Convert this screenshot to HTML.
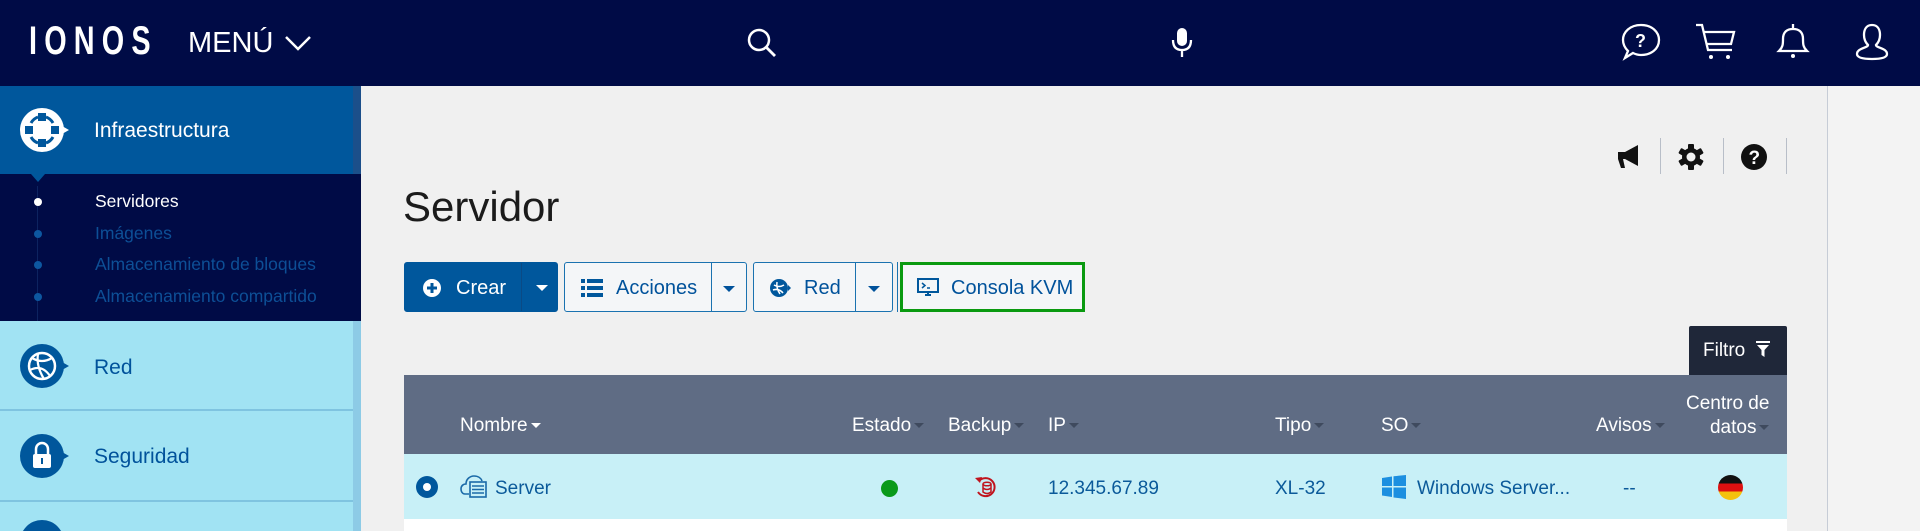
<!DOCTYPE html>
<html><head><meta charset="utf-8"><style>
*{margin:0;padding:0;box-sizing:border-box}
html{width:1920px;height:531px;overflow:hidden}
body{width:1920px;height:531px;overflow:hidden;background:#f0f0f0;font-family:"Liberation Sans",sans-serif;position:relative}
.a{position:absolute}
.nav{left:0;top:0;width:1920px;height:86px;background:#000b46}
.side{left:0;top:86px;width:361px;height:445px;background:#a1e3f3;overflow:hidden}
.t{white-space:nowrap}
.btn{position:absolute;top:262px;height:50px;border:1px solid #1a72b0;border-radius:3px;background:#f4f6f8;color:#00529b;font-size:20px}
.btn .s{position:absolute;top:0;bottom:0;border-left:1px solid #1a72b0}
.car{position:absolute;width:0;height:0;border-left:6px solid transparent;border-right:6px solid transparent;border-top:6px solid currentColor}
.th{color:#fff;font-size:19px;top:415px}
.th i{display:inline-block;width:0;height:0;border-left:5px solid transparent;border-right:5px solid transparent;border-top:5px solid #3f4a5e;margin-left:3px;vertical-align:middle}
.td{color:#0b5a9a;font-size:19px;top:478px}
</style></head><body>
<div class="a nav">
  <div class="a t" style="left:29px;top:19px;color:#fff;font-size:40px;letter-spacing:10px;font-weight:bold;transform:scaleX(0.72);transform-origin:left">IONOS</div>
  <div class="a t" style="left:188px;top:27px;color:#fff;font-size:29px">MENÚ</div>
  <svg class="a" style="left:284px;top:34px" width="28" height="18"><path d="M2 3 L14 15 L26 3" stroke="#fff" stroke-width="2.5" fill="none"/></svg>
  <svg class="a" style="left:746px;top:27px" width="32" height="32"><circle cx="13" cy="13" r="10" stroke="#fff" stroke-width="2.5" fill="none"/><path d="M20 20 L29 29" stroke="#fff" stroke-width="2.8"/></svg>
  <svg class="a" style="left:1170px;top:26px" width="24" height="34"><rect x="7" y="2" width="10" height="18" rx="5" fill="#fff"/><path d="M3 14 Q3 24 12 24 Q21 24 21 14 M12 24 V31" stroke="#fff" stroke-width="2.3" fill="none"/></svg>
  <svg class="a" style="left:1620px;top:22px" width="42" height="40"><path d="M21 3 C32 3 39 10 39 18 C39 27 31 33 21 33 C18 33 15 32 13 31 L5 36 L8 29 C5 26 3 22 3 18 C3 10 10 3 21 3 Z" stroke="#fff" stroke-width="2.3" fill="none"/><text x="15" y="25" fill="#fff" font-size="18" font-weight="bold" font-family="Liberation Sans">?</text></svg>
  <svg class="a" style="left:1694px;top:22px" width="44" height="40"><path d="M2 3 H8 L14 28 H38 M10 10 H40 L37 22 H13" stroke="#fff" stroke-width="2.3" fill="none"/><circle cx="17" cy="35" r="2" fill="#fff"/><circle cx="34" cy="35" r="2" fill="#fff"/></svg>
  <svg class="a" style="left:1774px;top:22px" width="38" height="40"><path d="M19 2 V6 M5 29 C9 25 9 22 9 17 C9 10 13 7 19 7 C25 7 29 10 29 17 C29 22 29 25 33 29 Z" stroke="#fff" stroke-width="2.3" fill="none"/><circle cx="19" cy="34" r="2" fill="#fff"/></svg>
  <svg class="a" style="left:1852px;top:22px" width="40" height="40"><path d="M20 3 C14 3 12 8 12 13 C12 18 14 21 16 23 C16 26 5 26 5 32 C5 36 12 37 20 37 C28 37 35 36 35 32 C35 26 24 26 24 23 C26 21 28 18 28 13 C28 8 26 3 20 3 Z" stroke="#fff" stroke-width="2.3" fill="none"/></svg>
</div>

<div class="a side">
  <div class="a" style="left:353px;top:0;width:8px;height:445px;background:#8dcbe6"></div>
  <div class="a" style="left:0;top:0;width:353px;height:88px;background:#00579c"></div>
  <div class="a" style="left:353px;top:0;width:8px;height:88px;background:#1b4f8a"></div>
  <svg class="a" style="left:16px;top:20px" width="56" height="48"><circle cx="26" cy="24" r="22" fill="#fff"/><path d="M46 20 L53 24 L46 28Z" fill="#fff"/><path d="M15 17 A13 13 0 0 1 22 11 M30 11 A13 13 0 0 1 37 17 M37 31 A13 13 0 0 1 30 37 M22 37 A13 13 0 0 1 15 31" stroke="#00579c" stroke-width="3" fill="none"/><rect x="22" y="7" width="8" height="8" fill="#00579c"/><rect x="22" y="33" width="8" height="8" fill="#00579c"/><rect x="9" y="20" width="8" height="8" fill="#00579c"/><rect x="35" y="20" width="8" height="8" fill="#00579c"/></svg>
  <div class="a t" style="left:94px;top:33px;color:#fff;font-size:21px">Infraestructura</div>
  <div class="a" style="left:0;top:88px;width:361px;height:147px;background:#000b46"></div>
  <div class="a" style="left:31px;top:88px;width:14px;height:8px;background:#00579c;clip-path:polygon(0 0,100% 0,50% 100%)"></div>
  <div class="a" style="left:37px;top:100px;width:1px;height:135px;background:#0d2360"></div>
  <div class="a" style="left:34px;top:112px;width:8px;height:8px;border-radius:50%;background:#fff"></div>
  <div class="a" style="left:34px;top:144px;width:8px;height:8px;border-radius:50%;background:#0d57a0"></div>
  <div class="a" style="left:34px;top:175px;width:8px;height:8px;border-radius:50%;background:#0d57a0"></div>
  <div class="a" style="left:34px;top:207px;width:8px;height:8px;border-radius:50%;background:#0d57a0"></div>
  <div class="a t" style="left:95px;top:105px;color:#fff;font-size:17.5px">Servidores</div>
  <div class="a t" style="left:95px;top:137px;color:#0d4f96;font-size:17.5px">Imágenes</div>
  <div class="a t" style="left:95px;top:168px;color:#0d4f96;font-size:17.5px">Almacenamiento de bloques</div>
  <div class="a t" style="left:95px;top:200px;color:#0d4f96;font-size:17.5px">Almacenamiento compartido</div>
  <svg class="a" style="left:16px;top:256px" width="56" height="48"><circle cx="26" cy="24" r="22" fill="#00579c"/><path d="M46 20 L53 24 L46 28Z" fill="#00579c"/><circle cx="26" cy="24" r="13" stroke="#fff" stroke-width="2.5" fill="none"/><path d="M16 16 Q26 22 36 16 M14 28 Q26 22 34 34 M22 12 Q20 24 28 37" stroke="#fff" stroke-width="2.2" fill="none"/></svg>
  <div class="a t" style="left:94px;top:270px;color:#00529b;font-size:21px">Red</div>
  <div class="a" style="left:0;top:323px;width:353px;height:2px;background:#7fc4e0"></div>
  <svg class="a" style="left:16px;top:346px" width="56" height="48"><circle cx="26" cy="24" r="22" fill="#00579c"/><path d="M46 20 L53 24 L46 28Z" fill="#00579c"/><rect x="17" y="22" width="18" height="14" rx="2" fill="#fff"/><path d="M20 22 V17 A6 6 0 0 1 32 17 V22" stroke="#fff" stroke-width="2.5" fill="none"/><rect x="25" y="26" width="2" height="6" fill="#00579c"/></svg>
  <div class="a t" style="left:94px;top:359px;color:#00529b;font-size:21px">Seguridad</div>
  <div class="a" style="left:0;top:414px;width:353px;height:2px;background:#7fc4e0"></div>
  <div class="a" style="left:20px;top:434px;width:44px;height:44px;border-radius:50%;background:#00579c"></div>
</div>

<div class="a" style="left:1827px;top:86px;width:1px;height:445px;background:#c6ccd6"></div>
<div class="a" style="left:1828px;top:86px;width:92px;height:445px;background:#f3f3f3"></div>

<div class="a t" style="left:403px;top:183px;color:#1b1b1b;font-size:42px">Servidor</div>

<svg class="a" style="left:1614px;top:142px" width="30" height="30"><path d="M4 10 H11 L24 3 V24 L11 17 H9 L11 26 H7 L4 17 Z" fill="#111"/></svg>
<div class="a" style="left:1660px;top:138px;width:1px;height:36px;background:#b8bec8"></div>
<svg class="a" style="left:1677px;top:143px" width="28" height="28" viewBox="0 0 28 28"><g fill="#111"><circle cx="14" cy="14" r="9"/><rect x="11" y="1" width="6" height="26" rx="1"/><rect x="11" y="1" width="6" height="26" rx="1" transform="rotate(60 14 14)"/><rect x="11" y="1" width="6" height="26" rx="1" transform="rotate(120 14 14)"/></g><circle cx="14" cy="14" r="4.5" fill="#f0f0f0"/></svg>
<div class="a" style="left:1723px;top:138px;width:1px;height:36px;background:#b8bec8"></div>
<svg class="a" style="left:1740px;top:143px" width="28" height="28"><circle cx="14" cy="14" r="13" fill="#111"/><text x="8.5" y="21" fill="#fff" font-size="19" font-weight="bold" font-family="Liberation Sans">?</text></svg>
<div class="a" style="left:1786px;top:138px;width:1px;height:36px;background:#b8bec8"></div>

<div class="btn" style="left:404px;width:154px;background:#00579c;border-color:#00579c;color:#fff">
  <svg class="a" style="left:17px;top:15px" width="20" height="20"><circle cx="10" cy="10" r="9" fill="#fff"/><path d="M10 5 V15 M5 10 H15" stroke="#00579c" stroke-width="3"/></svg>
  <span class="a t" style="left:51px;top:14px">Crear</span>
  <span class="s" style="left:116px;border-color:#0a4a85"></span>
  <span class="car" style="left:131px;top:22px;color:#fff"></span>
</div>
<div class="btn" style="left:564px;width:183px">
  <svg class="a" style="left:16px;top:16px" width="22" height="18" fill="#00579c"><rect x="0" y="0" width="4" height="4"/><rect x="6" y="0" width="16" height="4"/><rect x="0" y="7" width="4" height="4"/><rect x="6" y="7" width="16" height="4"/><rect x="0" y="14" width="4" height="4"/><rect x="6" y="14" width="16" height="4"/></svg>
  <span class="a t" style="left:51px;top:14px">Acciones</span>
  <span class="s" style="left:146px"></span>
  <span class="car" style="left:158px;top:23px"></span>
</div>
<div class="btn" style="left:753px;width:140px">
  <svg class="a" style="left:15px;top:15px" width="22" height="20"><circle cx="10" cy="10" r="9" fill="#00579c"/><path d="M19 7 L22 10 L19 13Z" fill="#00579c"/><path d="M5 7 Q10 10 15 7 M4 12 Q10 10 14 15 M8 4 Q7 10 11 16" stroke="#fff" stroke-width="1.5" fill="none"/></svg>
  <span class="a t" style="left:50px;top:14px">Red</span>
  <span class="s" style="left:101px"></span>
  <span class="car" style="left:114px;top:23px"></span>
</div>
<div class="a" style="left:897px;top:262px;width:1px;height:50px;background:#1a72b0"></div>
<div class="btn" style="left:900px;width:185px;border:3px solid #0a9a10;border-radius:0;color:#00529b">
  <svg class="a" style="left:14px;top:13px" width="22" height="20"><rect x="1" y="1" width="20" height="13" stroke="#00579c" stroke-width="2" fill="none"/><path d="M5 5 L8 7.5 L5 10 M10 10 H13" stroke="#00579c" stroke-width="1.5" fill="none"/><path d="M8 17 H14 M11 14 V17" stroke="#00579c" stroke-width="2"/></svg>
  <span class="a t" style="left:48px;top:12px">Consola KVM</span>
</div>

<div class="a" style="left:1689px;top:326px;width:98px;height:49px;background:#1f2739;border-radius:2px 2px 0 0"></div>
<div class="a t" style="left:1703px;top:340px;color:#fff;font-size:19px">Filtro</div>
<svg class="a" style="left:1756px;top:341px" width="14" height="17"><path d="M0 0 H14 V2 H0Z M1 4 H13 L8.5 9 V16 L5.5 14 V9Z" fill="#fff"/></svg>

<div class="a" style="left:404px;top:375px;width:1383px;height:79px;background:#5f6c84"></div>
<div class="a t th" style="left:460px">Nombre<i style="border-top-color:#fff"></i></div>
<div class="a t th" style="left:852px">Estado<i></i></div>
<div class="a t th" style="left:948px">Backup<i></i></div>
<div class="a t th" style="left:1048px">IP<i></i></div>
<div class="a t th" style="left:1275px">Tipo<i></i></div>
<div class="a t th" style="left:1381px">SO<i></i></div>
<div class="a t th" style="left:1596px">Avisos<i></i></div>
<div class="a t th" style="left:1686px;top:392px;line-height:24px;text-align:right">Centro de<br>datos<i></i></div>

<div class="a" style="left:404px;top:454px;width:1383px;height:65px;background:#c8f0f7"></div>
<div class="a" style="left:404px;top:519px;width:1383px;height:12px;background:#fff"></div>
<div class="a" style="left:416px;top:476px;width:22px;height:22px;border-radius:50%;background:#00579c"></div>
<div class="a" style="left:423px;top:483px;width:8px;height:8px;border-radius:50%;background:#fff"></div>
<svg class="a" style="left:460px;top:474px" width="30" height="24"><path d="M9 20 H5 C2 20 1 17 1 15 C1 12 3 10 6 10 C6 5 10 2 14 2 C18 2 21 4 22 7" stroke="#1a6aa8" stroke-width="1.6" fill="none"/><rect x="10" y="8" width="16" height="15" stroke="#1a6aa8" stroke-width="1.6" fill="#c8f0f7"/><path d="M12 12 H24 M12 15.5 H24 M12 19 H24" stroke="#1a6aa8" stroke-width="1.5"/></svg>
<div class="a t td" style="left:495px">Server</div>
<div class="a" style="left:881px;top:480px;width:17px;height:17px;border-radius:50%;background:#0a9a1a"></div>
<svg class="a" style="left:974px;top:475px" width="24" height="26"><path d="M5 6 A9 9 0 1 1 4 17" stroke="#c0141e" stroke-width="2" fill="none"/><path d="M1 3 L6 8 L8 2Z" fill="#c0141e"/><ellipse cx="13" cy="9" rx="4" ry="1.8" stroke="#c0141e" stroke-width="1.5" fill="none"/><path d="M9 9 V17 Q13 20 17 17 V9 M9 13 Q13 16 17 13" stroke="#c0141e" stroke-width="1.5" fill="none"/></svg>
<div class="a t td" style="left:1048px">12.345.67.89</div>
<div class="a t td" style="left:1275px">XL-32</div>
<svg class="a" style="left:1382px;top:475px" width="24" height="24" fill="#1c8fe0"><path d="M0 3 L10 1.5 V11 H0Z M11.5 1.3 L24 0 V11 H11.5Z M0 12.5 H10 V22 L0 20.5Z M11.5 12.5 H24 V24 L11.5 22.5Z"/></svg>
<div class="a t td" style="left:1417px">Windows Server...</div>
<div class="a t td" style="left:1623px">--</div>
<div class="a" style="left:1718px;top:475px;width:25px;height:25px;border-radius:50%;overflow:hidden;background:linear-gradient(#111 0 33%,#dd1010 33% 66%,#f4c20d 66%)"></div>
</body></html>
